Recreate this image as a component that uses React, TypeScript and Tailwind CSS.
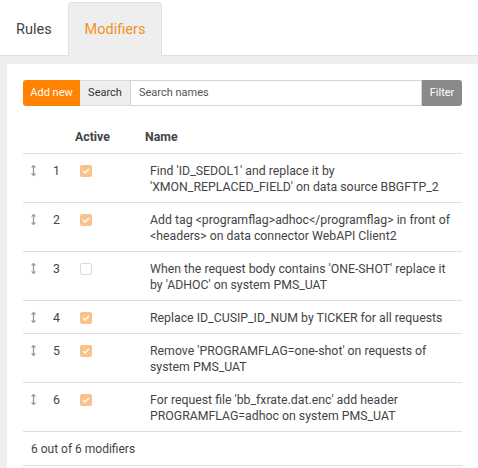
import { useState } from "react";

type Modifier = {
  id: number;
  active: boolean;
  lines: string[];
};

const modifiers: Modifier[] = [
  { id: 1, active: true, lines: ["Find 'ID_SEDOL1' and replace it by", "'XMON_REPLACED_FIELD' on data source BBGFTP_2"] },
  { id: 2, active: true, lines: ["Add tag <programflag>adhoc</programflag> in front of", "<headers> on data connector WebAPI Client2"] },
  { id: 3, active: false, lines: ["When the request body contains 'ONE-SHOT' replace it", "by 'ADHOC' on system PMS_UAT"] },
  { id: 4, active: true, lines: ["Replace ID_CUSIP_ID_NUM by TICKER for all requests"] },
  { id: 5, active: true, lines: ["Remove 'PROGRAMFLAG=one-shot' on requests of", "system PMS_UAT"] },
  { id: 6, active: true, lines: ["For request file 'bb_fxrate.dat.enc' add header", "PROGRAMFLAG=adhoc on system PMS_UAT"] },
];

function DragHandle() {
  return (
    <svg width="7" height="13" viewBox="0 0 7 13" className="text-[#999]">
      <path d="M3.5 1.5v10" stroke="currentColor" strokeWidth="1.3" />
      <path d="M0.8 3.6 3.5 0.8 6.2 3.6Z" fill="currentColor" />
      <path d="M0.8 9.4 3.5 12.2 6.2 9.4Z" fill="currentColor" />
    </svg>
  );
}

function Check({ on }: { on: boolean }) {
  if (!on) {
    return <div className="w-3 h-3 rounded-[2px] border border-[#dcdcdc] bg-white" />;
  }
  return (
    <div className="w-3 h-3 rounded-[2px] bg-[#f9c18c] flex items-center justify-center">
      <svg width="8" height="6" viewBox="0 0 8 6">
        <path d="M1 3.1 3 5 7 1" fill="none" stroke="white" strokeWidth="1.4" />
      </svg>
    </div>
  );
}

export default function App() {
  const [tab, setTab] = useState("modifiers");

  return (
    <main className="min-h-screen bg-white text-[#444] font-['Roboto',sans-serif] overflow-hidden">
      {/* tabs */}
      <div className="flex items-end pt-[2px] h-[56px] relative z-10">
        <button
          onClick={() => setTab("rules")}
          className="h-[53px] px-[16px] w-[68px] text-left text-[14.5px] text-[#444]"
        >
          Rules
        </button>
        <button
          onClick={() => setTab("modifiers")}
          className={
            tab === "modifiers"
              ? "h-[54px] w-[94px] text-[14.5px] text-[#f39224] bg-[#eeeeee] border border-b-0 border-[#e2e2e2] rounded-t-[4px]"
              : "h-[54px] w-[94px] text-[14.5px] text-[#444]"
          }
        >
          Modifiers
        </button>
      </div>

      <div className="-mt-px border-t border-[#e0e0e0] bg-[#eeeeee] pl-[7px] pt-[8px]">
        <div className="bg-white px-4 pt-4 min-h-[420px]">
          {/* toolbar */}
          <div className="flex h-[26px] text-[11px]">
            <button className="bg-[#ff8200] text-white whitespace-nowrap rounded-l-[3px] w-[57px]">Add new</button>
            <span className="bg-[#eeeeee] text-[#333] border-y border-[#dcdcdc] w-[50px] flex items-center justify-center">
              Search
            </span>
            <input
              placeholder="Search names"
              className="flex-1 min-w-0 border border-[#d4d4d4] px-[8px] text-[11px] placeholder-[#555] outline-none"
            />
            <button className="bg-[#8a8a8a] text-white w-[40px] rounded-r-[3px]">Filter</button>
          </div>

          {/* table */}
          <div className="mt-4 text-[12.3px]">
            <div className="grid grid-cols-[24px_28px_70px_1fr] h-[32px] items-center font-bold text-[#444] border-b border-[#dedede]">
              <span />
              <span />
              <span>Active</span>
              <span>Name</span>
            </div>
            {modifiers.map((m) => (
              <div
                key={m.id}
                className="grid grid-cols-[24px_28px_70px_1fr] pt-[9px] pb-[7px] border-b border-[#dedede] leading-[16px]"
              >
                <span className="pl-[7px] pt-[1px]">
                  <DragHandle />
                </span>
                <span className="pl-[6px]">{m.id}</span>
                <span className="pl-[5px] pt-[2px]">
                  <Check on={m.active} />
                </span>
                <span className="pl-[5px] text-[#444] whitespace-nowrap">
                  {m.lines.map((l, i) => (
                    <div key={i}>{l}</div>
                  ))}
                </span>
              </div>
            ))}
            <div className="px-2 pt-[9px] pb-[8px] text-[12px] leading-[16px] border-b border-[#dedede]">6 out of 6 modifiers</div>
          </div>
        </div>
      </div>
    </main>
  );
}
